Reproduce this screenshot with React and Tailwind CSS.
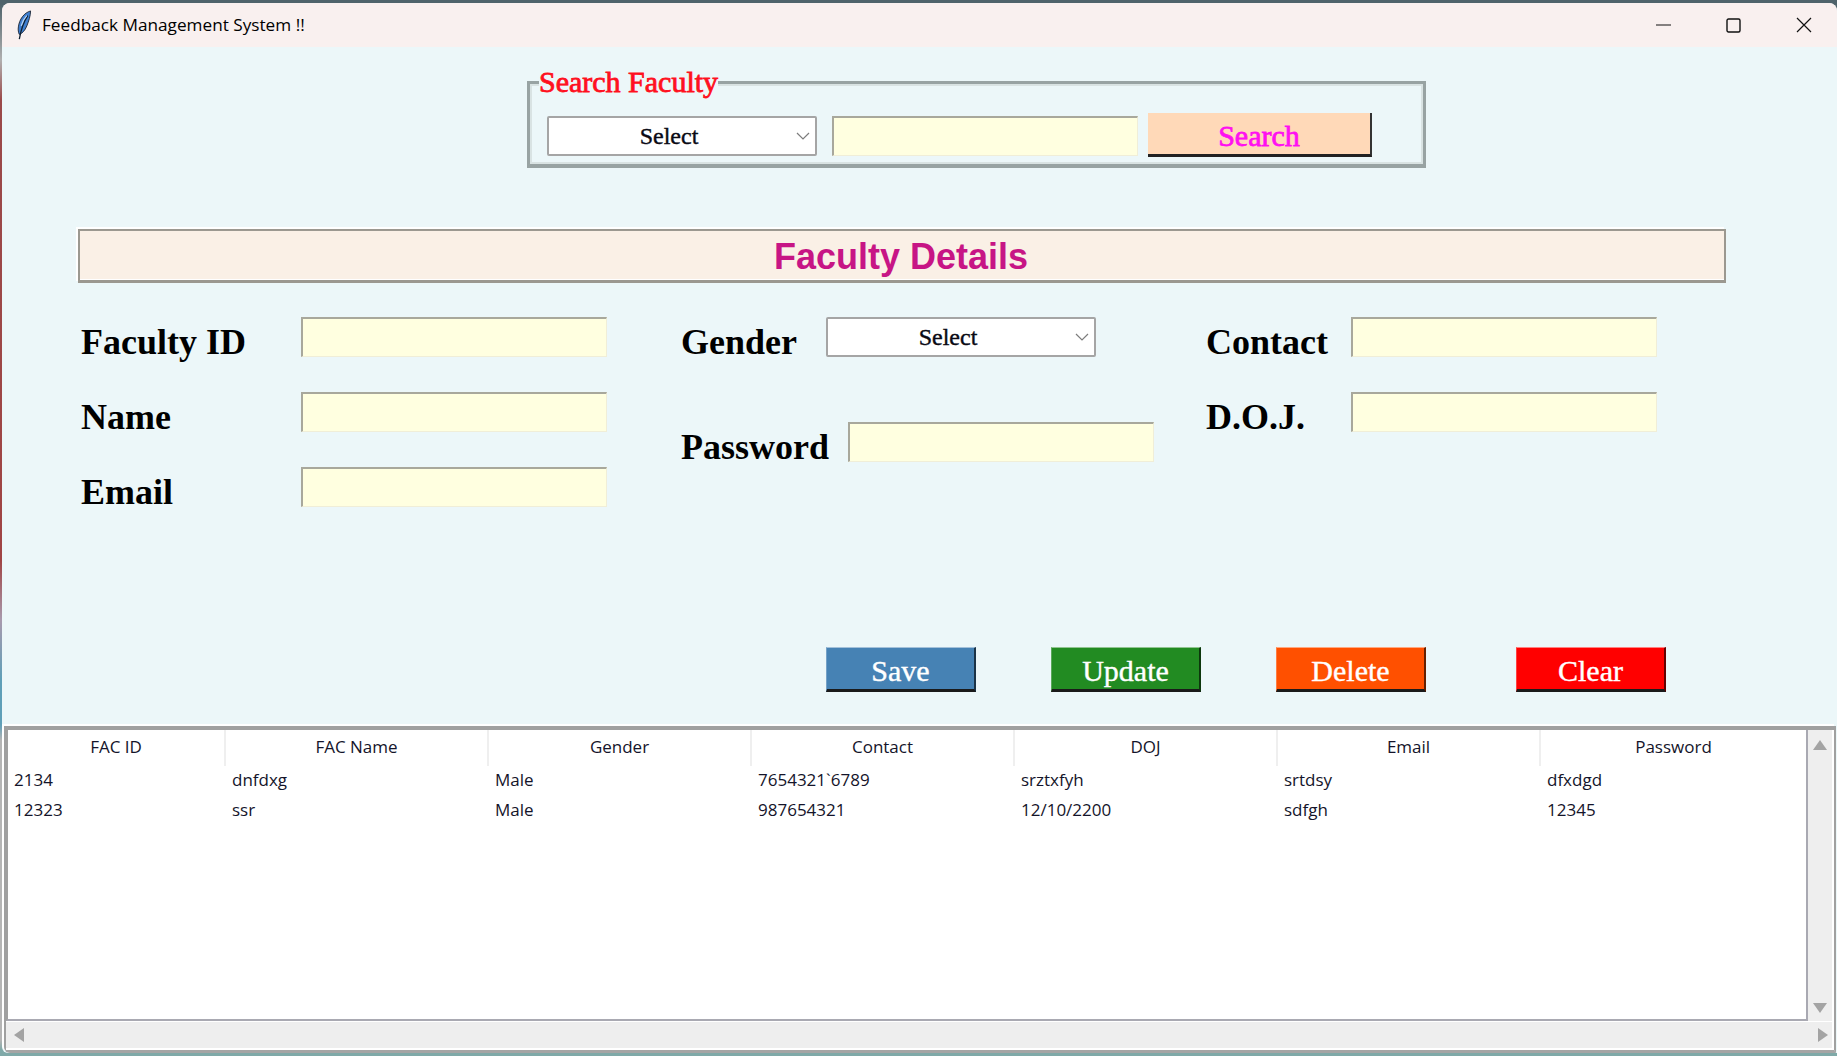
const serif = "font-['Liberation_Serif',serif]";
const heavy = "[-webkit-text-stroke:0.4px]";
const entryClass =
  "block h-10 w-[306px] border border-t-2 border-l-2 border-[#f0eed8] border-t-[#a8a89c] border-l-[#a8a89c] bg-[#ffffe0] outline-none";

const columns = ["FAC ID", "FAC Name", "Gender", "Contact", "DOJ", "Email", "Password"];
const rows = [
  ["2134", "dnfdxg", "Male", "7654321`6789", "srztxfyh", "srtdsy", "dfxdgd"],
  ["12323", "ssr", "Male", "987654321", "12/10/2200", "sdfgh", "12345"],
];

function Feather() {
  return (
    <svg width="18" height="30" viewBox="0 0 18 32">
      <path d="M16 1C9 3 4 10 3 18c-.5 3 0 6 1 8 3-1 6-4 8-9 2-5 4-11 4-16z" fill="#3f7fd0" stroke="#1f2a3a" strokeWidth="1" />
      <path d="M13 6C9 12 6 20 4 31" fill="none" stroke="#10202f" strokeWidth="1.4" />
      <path d="M12 6c-3 3-5 7-6 11" fill="none" stroke="#bcd7f5" strokeWidth="1.2" />
    </svg>
  );
}

function Chevron() {
  return (
    <svg width="14" height="8" viewBox="0 0 14 8" className="shrink-0">
      <path d="M1 1l6 6 6-6" fill="none" stroke="#7d7d7d" strokeWidth="1.2" />
    </svg>
  );
}

function Combo({ className = "" }) {
  return (
    <div className={`flex h-10 w-[270px] items-center rounded-[2px] border-2 border-[#a5a5a5] bg-white pr-[5px] ${className}`}>
      <span className={`flex-1 pr-[7px] text-center text-[24px] text-[#0a0a14] ${heavy} ${serif}`}>Select</span>
      <Chevron />
    </div>
  );
}

function Label({ children, className = "" }) {
  return <label className={`mt-[5px] block text-[36px] leading-10 font-bold text-black ${serif} ${className}`}>{children}</label>;
}

function ActionButton({ children, className }) {
  return (
    <button className={`h-[45px] w-[150px] border border-b-[3px] border-r-2 border-t-[#ffffff80] border-l-[#ffffff40] border-r-[#00000099] border-b-[#1a1a1a] pb-[2px] text-[30px] font-normal text-white ${heavy} ${serif} ${className}`}>
      {children}
    </button>
  );
}

export default function App() {
  return (
    <div className="h-[1056px] w-[1837px] overflow-hidden bg-[linear-gradient(#4f636b_4px,#b0b0b0_60px,#9a4a4a_100px,#a04545_560px,#a89aae_620px,#5f9fb8_680px,#5f9fb8_725px,#b5b5b5_740px,#b5b5b5_1040px,#7fa9a8_1050px)] pt-[3px] pl-[2px]">
      <div className="flex h-[1050px] flex-col overflow-hidden rounded-t-lg rounded-bl-md bg-[#ecf7f9] font-['Open_Sans',sans-serif]">
        <div className="flex h-11 shrink-0 items-center bg-[#f9f0ef] pl-[13px]">
          <Feather />
          <span className="ml-[9px] text-[17.2px] text-black">Feedback Management System !!</span>
          <div className="ml-auto flex items-center">
            <svg width="16" height="2" viewBox="0 0 16 2" className="mr-[54px]"><path d="M0 1h15" stroke="#111" strokeWidth="1" /></svg>
            <svg width="15" height="15" viewBox="0 0 15 15" className="mr-[55px]"><rect x="1" y="1" width="13" height="13" rx="1.5" fill="none" stroke="#111" strokeWidth="1.4" /></svg>
            <svg width="16" height="16" viewBox="0 0 16 16" className="mr-[25px]"><path d="M1 1l14 14M15 1L1 15" stroke="#111" strokeWidth="1.2" /></svg>
          </div>
        </div>

        <fieldset className="mt-[19px] ml-[525px] h-[102px] w-[899px] border-x-[3px] border-t-[3px] border-b-[4px] border-[#98a3a3] pl-[17px] shadow-[inset_2px_2px_0_#d9e3e3,inset_-2px_-2px_0_#d9e3e3]">
          <legend className={`-ml-[8px] bg-[#ecf7f9] text-[30px] leading-8 text-[#ff1020] [-webkit-text-stroke:0.8px] ${serif}`}>Search Faculty</legend>
          <div className="mt-[15px] flex items-start">
            <Combo className="mt-[3px]" />
            <input className={`${entryClass} mt-[3px] ml-[15px]`} />
            <button className={`ml-[10px] h-[44px] w-[224px] border-r-2 border-b-[3px] border-r-[#333] border-b-[#222] bg-[#ffd9b8] text-[30px] text-[#ff10f0] [-webkit-text-stroke:0.8px] ${serif}`}>
              Search
            </button>
          </div>
        </fieldset>

        <div className="mt-[61px] ml-[76px] flex h-[54px] w-[1648px] items-center justify-center border-2 border-b-[3px] border-[#9b9890] bg-[#faf0e6] pl-[2px] pr-[4px] shadow-[-2px_-2px_0_#ffffff,inset_0_-1px_0_#ffffff]">
          <h1 className="mt-[3px] font-['Liberation_Sans',sans-serif] text-[36px] font-bold text-[#c71585]">Faculty Details</h1>
        </div>

        <div className="mt-[34px] flex">
          <div className="ml-[79px] w-[600px]">
            <div className="flex h-[75px] items-start"><Label className="w-[220px]">Faculty ID</Label><input className={entryClass} /></div>
            <div className="flex h-[75px] items-start"><Label className="w-[220px]">Name</Label><input className={entryClass} /></div>
            <div className="flex items-start"><Label className="w-[220px]">Email</Label><input className={entryClass} /></div>
          </div>
          <div className="w-[525px]">
            <div className="flex h-[105px] items-start"><Label className="w-[145px]">Gender</Label><Combo /></div>
            <div className="flex items-start"><Label className="w-[167px]">Password</Label><input className={entryClass} /></div>
          </div>
          <div>
            <div className="flex h-[75px] items-start"><Label className="w-[145px]">Contact</Label><input className={entryClass} /></div>
            <div className="flex items-start"><Label className="w-[145px]">D.O.J.</Label><input className={entryClass} /></div>
          </div>
        </div>

        <div className="mt-[135px] ml-[824px] flex">
          <ActionButton className="bg-[#4682b4]">Save</ActionButton>
          <ActionButton className="ml-[75px] bg-[#228b22]">Update</ActionButton>
          <ActionButton className="ml-[75px] bg-[#ff5000]">Delete</ActionButton>
          <ActionButton className="ml-[90px] bg-[#ff0000]">Clear</ActionButton>
        </div>

        <div className="mt-[34px] ml-[2px] flex h-[327px] w-[1832px] flex-col rounded-bl-md border-x-2 border-t-4 border-b-[3px] border-x-[#a0a0a0] border-t-[#a0a0a0] border-b-[#a5a5a5] bg-[#eeeeee] shadow-[-2px_-2px_0_#ffffff]">
          <div className="flex min-h-0 flex-1">
            <div className="flex-1 border-2 border-t-0 border-[#a9a9b2] border-l-[#a0a0a0] bg-white">
              <table className="w-full table-fixed border-collapse text-[17px] text-[#14142a]">
                <colgroup>
                  <col className="w-[217px]" />
                  <col className="w-[263px]" />
                  <col className="w-[263px]" />
                  <col className="w-[263px]" />
                  <col className="w-[263px]" />
                  <col className="w-[263px]" />
                  <col />
                </colgroup>
                <thead>
                  <tr className="h-9">
                    {columns.map((c) => (
                      <th key={c} className="border-r-2 border-[#efefef] pb-[2px] text-center font-normal last:border-r-0">{c}</th>
                    ))}
                  </tr>
                </thead>
                <tbody>
                  {rows.map((r) => (
                    <tr key={r[0]} className="h-[30px]">
                      {r.map((v, i) => (
                        <td key={i} className="pb-[2px] pl-[7px] text-left first:pl-[6px]">{v}</td>
                      ))}
                    </tr>
                  ))}
                </tbody>
              </table>
            </div>
            <div className="flex w-[26px] shrink-0 flex-col items-center justify-between border-r-2 border-white pt-[10px] pb-[8px]">
              <svg width="14" height="10" viewBox="0 0 14 10"><path d="M7 0l7 10H0z" fill="#a3a3a3" /></svg>
              <svg width="14" height="10" viewBox="0 0 14 10"><path d="M0 0h14L7 10z" fill="#a3a3a3" /></svg>
            </div>
          </div>
          <div className="flex h-[29px] shrink-0 items-center justify-between border-t border-r-2 border-b-2 border-white pr-[4px] pl-[8px]">
            <svg width="10" height="14" viewBox="0 0 10 14"><path d="M10 0v14L0 7z" fill="#a3a3a3" /></svg>
            <svg width="10" height="14" viewBox="0 0 10 14"><path d="M0 0l10 7-10 7z" fill="#a3a3a3" /></svg>
          </div>
        </div>
      </div>
    </div>
  );
}
